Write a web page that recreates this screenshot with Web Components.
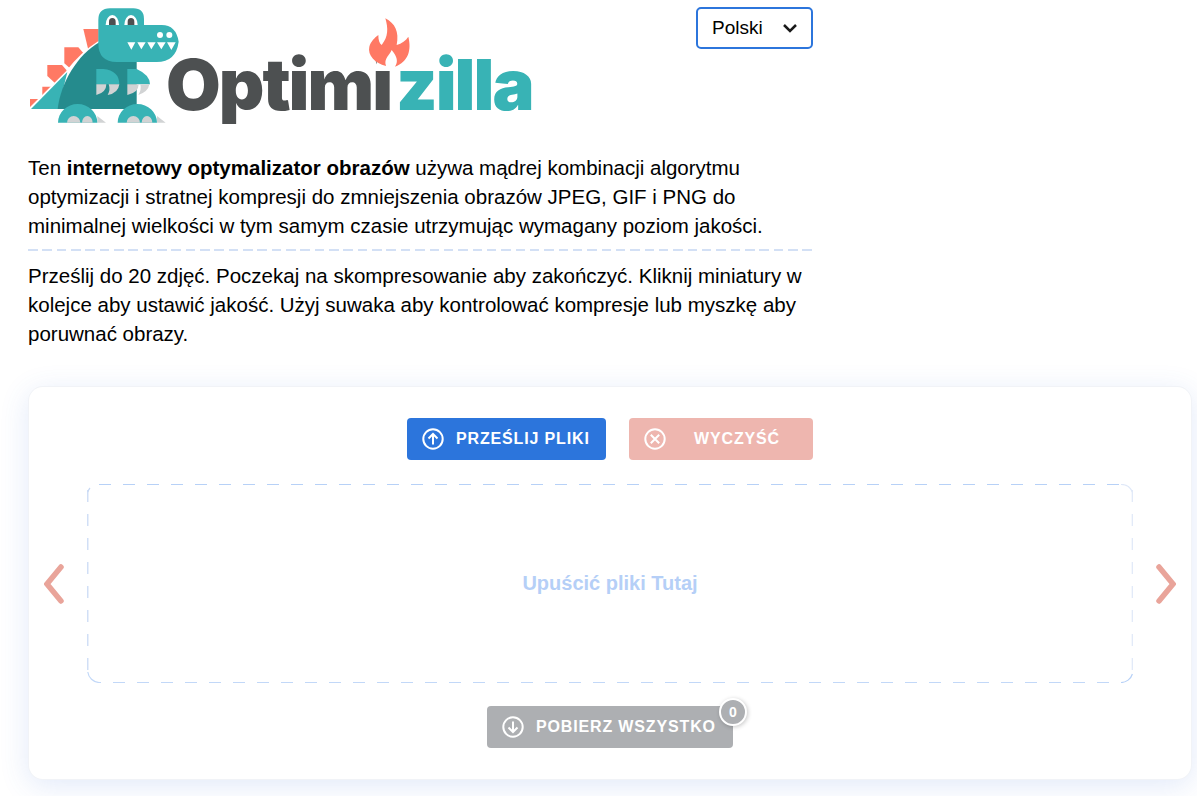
<!DOCTYPE html>
<html lang="pl"><head><meta charset="utf-8"><title>Optimizilla</title>
<style>
html,body{margin:0;padding:0;background:#fff;font-family:"Liberation Sans",Arial,sans-serif;color:#000}
body{overflow:hidden;height:796px}
</style></head><body>
<oz-page>
  <oz-header></oz-header>
  <oz-intro>
    <p>Ten <b>internetowy optymalizator obrazów</b> używa mądrej kombinacji algorytmu optymizacji i stratnej kompresji do zmniejszenia obrazów JPEG, GIF i PNG do minimalnej wielkości w tym samym czasie utrzymując wymagany poziom jakości.</p>
    <p slot="second">Prześlij do 20 zdjęć. Poczekaj na skompresowanie aby zakończyć. Kliknij miniatury w kolejce aby ustawić jakość. Użyj suwaka aby kontrolować kompresje lub myszkę aby poruwnać obrazy.</p>
  </oz-intro>
  <oz-card></oz-card>
</oz-page>
<template id="t-logo">
<style>:host{display:block;width:505px;height:118px}svg{display:block}</style>
<svg width="515" height="128" viewBox="27 21 1545 384">
  <g fill="#ff7964">
    <polygon points="190,87 236,87 236,150 205,150"/>
    <polygon points="133,142 175,142 195,165 150,205 133,190"/>
    <polygon points="82,195 126,195 145,217 108,252 82,228"/>
    <polygon points="67,260 100,260 70,292 67,290"/>
    <polygon points="30,297 62,297 30,326"/>
  </g>
  <path d="M30 327L142 216C165 185 200 150 240 125" fill="none" stroke="#fff" stroke-width="9"/>
  <path d="M33 327 L142 216 L115 327Z" fill="#38b3b5"/>
  <path d="M113 327C122 250 170 165 240 125L350 180V327Z" fill="#258b8d"/>
  <path d="M270 25H340Q372 25 372 57V75H425Q468 75 476 125Q468 186 410 186H290Q235 186 235 130V60Q235 25 270 25Z" fill="#38b3b5"/>
  <g fill="#fff">
    <path d="M322 127H346L334 149ZM352 127H377L364 148ZM382 127H407L394 148ZM411 127H437L424 148ZM441 127H467L454 150Z"/>
    <circle cx="420" cy="105" r="9"/><circle cx="448" cy="105" r="9"/>
    <path d="M257 75A20 30 0 0 1 297 75Z"/><path d="M313 75A20 30 0 0 1 353 75Z"/>
  </g>
  <path d="M267 75V65A10 11 0 0 1 287 65V75ZM323 75V65A10 11 0 0 1 343 65V75Z" fill="#4d5051"/>
  <path d="M229 207H250Q298 212 298 253H229Z" fill="#38b3b5"/>
  <path d="M322 207H350Q390 225 390 253H322Z" fill="#38b3b5"/>
  <g fill="#d1d3d4">
    <path d="M229 253H259Q259 278 229 285ZM266 253H298Q295 280 263 285Q272 270 266 253Z"/>
    <path d="M322 253H356Q356 278 322 285ZM361 253H388Q385 275 355 285Q365 270 361 253Z"/>
    <path d="M232 348L258 368H232ZM411 348L437 368H411Z"/>
  </g>
  <path d="M114 368A59 56 0 0 1 232 368ZM293 368A59 56 0 0 1 411 368Z" fill="#38b3b5"/>
  <path d="M141 368A20 20 0 0 1 181 368ZM320 368A20 20 0 0 1 360 368Z" fill="#d1d3d4"/>
  <path d="M186 368A16 20 0 0 1 218 368ZM365 368A16 20 0 0 1 397 368Z" fill="#d1d3d4"/>
  <text y="330" font-family="Inter,sans-serif" font-weight="900" font-size="212" style="letter-spacing:-6px"><tspan x="438" fill="#4d5051">Optimi</tspan><tspan x="1128" fill="#38b3b5">zilla</tspan></text>
  <rect x="1070" y="160" width="62" height="49" fill="#fff"/>
  <path transform="translate(780 0)" d="M316 55C345 70 358 95 350 135C365 130 378 122 385 110C395 150 385 185 345 200C355 185 352 170 335 150C330 165 310 175 318 198C285 190 262 165 268 140C272 125 285 112 295 105C295 120 298 130 305 135C325 110 325 85 316 55Z" fill="#ff7964"/>
</svg>
</template>
<script>
const def=(n,html)=>customElements.define(n,class extends HTMLElement{constructor(){super();this.attachShadow({mode:'open'}).innerHTML=html}});
def('oz-logo',document.getElementById('t-logo').innerHTML);
def('oz-page',`<style>:host{display:block;padding:0 6px 0 29px;width:1162px}</style><slot></slot>`);
def('oz-select',`<style>:host{display:flex;align-items:center;justify-content:space-between;box-sizing:border-box;width:117px;height:42px;border:2px solid #2c75dc;border-radius:5px;padding:0 13px 0 14px;font:19px "Liberation Sans",Arial,sans-serif;color:#000;background:#fff}svg{display:block}</style><span>Polski</span><svg width="16" height="10" viewBox="0 0 16 10"><path d="M2 2L8 8L14 2" fill="none" stroke="#1a1a1a" stroke-width="2.5"/></svg>`);
def('oz-header',`<style>:host{display:flex;justify-content:space-between;align-items:flex-start;width:784px;padding-top:7px}</style><oz-logo></oz-logo><oz-select></oz-select>`);
def('oz-intro',`<style>:host{display:block;width:785px;margin-left:-1px;font:20.5px/29px "Liberation Sans",Arial,sans-serif;color:#000;padding-top:28px}
::slotted(p){margin:0}
.l{height:2px;margin:9px 0 10px;background:repeating-linear-gradient(90deg,#d3e0f5 0 9.5px,transparent 9.5px 14.34px)}
</style><slot></slot><div class="l"></div><slot name="second"></slot>`);
def('oz-zone',`<style>:host{position:relative;display:flex;box-sizing:border-box;width:1046px;height:199px;align-items:center;justify-content:center;color:#b5cff7;font:bold 20px "Liberation Sans",Arial,sans-serif}
svg{position:absolute;inset:0}</style>
<svg width="1046" height="199" fill="none" stroke-width="1.2">
<path d="M12 .5H1034" stroke="#b7d1f7" stroke-dasharray="12 12"/>
<path d="M1022 198.5H12" stroke="#c2d8f8" stroke-dasharray="12 12"/>
<path d="M.8 5V186" stroke="#c6d8f4" stroke-dasharray="12 12" stroke-dashoffset="-1"/>
<path d="M1045.3 5V186" stroke="#dfe8f8" stroke-dasharray="12 12" stroke-dashoffset="-1"/>
<path d="M3 4A12 12 0 0 0 .8 8" stroke="#c6d8f4"/>
<path d="M1045.4 190A12 12 0 0 1 1034 198.5" stroke="#b7d1f7"/>
<path d="M.8 188A12 12 0 0 0 12 198.5" stroke="#c2d8f8"/>
<path d="M1034 .5A12 12 0 0 1 1045.3 8" stroke="#dfe8f8"/>
</svg><slot></slot>`);
def('oz-card',`<style>:host{display:block;box-sizing:border-box;height:392px;margin-top:39px;background:#fff;border-radius:14px;box-shadow:0 0 0 1px #f1f3f7,0 6px 30px rgba(60,110,220,.16);padding-top:31px;position:relative;font-family:"Liberation Sans",Arial,sans-serif}
.top{display:flex;justify-content:center;gap:23px}
.zone-row{display:flex;justify-content:space-between;align-items:center;margin-top:24px;padding:0 15px}
.bot{display:flex;justify-content:center;margin-top:23px}
.b{position:relative;display:flex;align-items:center;box-sizing:border-box;height:42px;border-radius:4px;color:#fff;font-weight:bold;font-size:16px;letter-spacing:.85px;padding-left:15px}
.b svg{flex:none;display:block}
.b span{white-space:nowrap;margin-left:12px}
.up{background:#2c75dc;width:199px}
.cl{background:#eeb6af;width:184px}.cl span{margin-left:28px}
.dl{background:#adafb2;width:246px}
.badge{position:absolute;right:-14px;top:-8px;width:28px;height:28px;box-sizing:border-box;border-radius:50%;background:#adafb2;border:2px solid #fff;box-shadow:1px 1px 4px rgba(0,0,0,.22);font-size:14px;display:flex;align-items:center;justify-content:center;letter-spacing:0}
</style>
<div class="top">
 <div class="b up"><svg width="22" height="22" viewBox="0 0 22 22" fill="none" stroke="#fff" stroke-width="2"><circle cx="11" cy="11" r="9.7"/><path d="M11 16.5V6M6.5 10.5L11 6L15.5 10.5"/></svg><span>PRZEŚLIJ PLIKI</span></div>
 <div class="b cl"><svg width="22" height="22" viewBox="0 0 22 22" fill="none" stroke="#fff" stroke-width="2"><circle cx="11" cy="11" r="9.7"/><path d="M6.8 6.8L15.2 15.2M15.2 6.8L6.8 15.2"/></svg><span>WYCZYŚĆ</span></div>
</div>
<div class="zone-row">
 <svg width="20" height="40" viewBox="0 0 20 40" fill="none" stroke="#e9a49a" stroke-width="5.5" stroke-linecap="round"><path d="M17 3L3 20L17 37"/></svg>
 <oz-zone>Upuścić pliki Tutaj</oz-zone>
 <svg width="20" height="40" viewBox="0 0 20 40" fill="none" stroke="#e9a49a" stroke-width="5.5" stroke-linecap="round"><path d="M3 3L17 20L3 37"/></svg>
</div>
<div class="bot"><div class="b dl"><svg width="22" height="22" viewBox="0 0 22 22" fill="none" stroke="#fff" stroke-width="2"><circle cx="11" cy="11" r="9.7"/><path d="M11 5.5V16M6.5 11.5L11 16L15.5 11.5"/></svg><span>POBIERZ WSZYSTKO</span><div class="badge">0</div></div></div>`);
</script>
</body></html>
